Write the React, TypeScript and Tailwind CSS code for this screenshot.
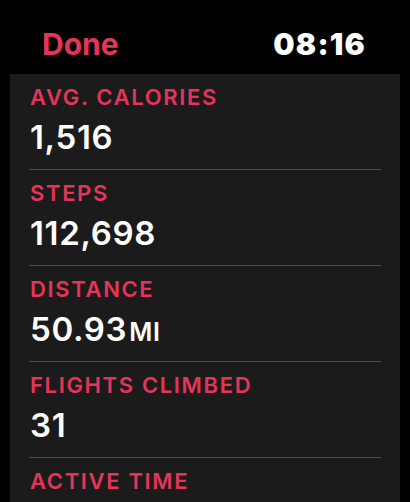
import React from "react";

const rows: { label: string; value?: string; unit?: string }[] = [
  { label: "AVG. CALORIES", value: "1,516" },
  { label: "STEPS", value: "112,698" },
  { label: "DISTANCE", value: "50.93", unit: "MI" },
  { label: "FLIGHTS CLIMBED", value: "31" },
  { label: "ACTIVE TIME" },
];

export default function App() {
  return (
    <div
      className="w-[410px] h-[502px] bg-black overflow-hidden flex flex-col"
      style={{ fontFamily: "Inter, 'Noto Sans', sans-serif" }}
    >
      <div className="flex justify-between items-start pt-[29px] pb-[15px] pl-[42px] pr-[44px] shrink-0">
        <span className="text-[30px] leading-[30px] font-bold text-[#e5345a]">Done</span>
        <span className="text-[30px] leading-[30px] font-black text-white tracking-[0.04em]">08:16</span>
      </div>
      <div className="mx-[10px] bg-[#1b1b1b] px-[19px] flex-1">
        {rows.map((r) => (
          <div key={r.label} className="border-b border-[#4a4a4a] pt-[12px] pb-[15px] flex flex-col gap-[13px]">
            <div className="text-[22px] leading-[22px] font-semibold text-[#e5345a] tracking-[0.075em] pl-[1px]">
              {r.label}
            </div>
            {r.value && (
              <div className="h-[33px] text-[33px] leading-[33px] font-semibold text-white tracking-[0.02em] pl-[1px]">
                {r.value}
                {r.unit && <span className="text-[25px] leading-none font-semibold ml-[2px]">{r.unit}</span>}
              </div>
            )}
          </div>
        ))}
      </div>
    </div>
  );
}
